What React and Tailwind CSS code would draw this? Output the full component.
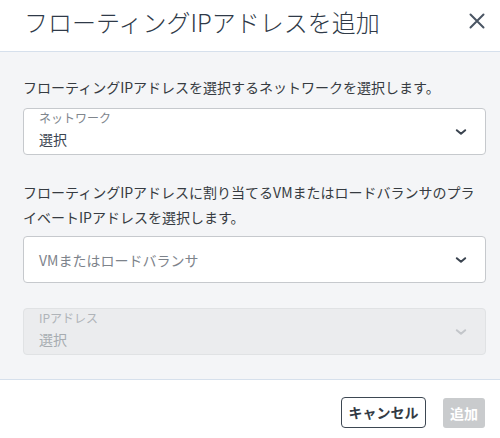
import React from "react";

function Chevron({ color = "#3b4450" }) {
  return (
    <svg width="12" height="8" viewBox="0 0 12 8" fill="none">
      <path d="M1.8 2.2 L6 5.8 L10.2 2.2" stroke={color} strokeWidth="2" strokeLinecap="round" strokeLinejoin="round" />
    </svg>
  );
}

export default function App() {
  return (
    <div
      className="w-[500px] h-[438px] bg-white overflow-hidden flex flex-col"
      style={{ fontFamily: '"Noto Sans CJK JP", "Noto Sans", sans-serif' }}
    >
      <div className="h-[52px] shrink-0 flex items-start justify-between pl-[24px] pr-[14px] pt-[8px] border-b border-[#d6e0ec]">
        <div className="text-[24px] leading-[28px] font-light text-[#2f3a48]">フローティングIPアドレスを追加</div>
        <button className="mt-[4px] w-[18px] h-[18px] flex items-center justify-center">
          <svg width="16" height="16" viewBox="0 0 16 16" fill="none">
            <path d="M1.5 1.5 L14.5 14.5 M14.5 1.5 L1.5 14.5" stroke="#4a5563" strokeWidth="2" strokeLinecap="round" />
          </svg>
        </button>
      </div>
      <div className="bg-[#f4f5f7] pl-[23px] pr-[14px] pt-[23px] pb-[24px] border-b border-[#d6e0ec] shrink-0">
        <p className="text-[14px] leading-[25px] text-[#363b41]">
          フローティングIPアドレスを選択するネットワークを選択します。
        </p>
        <div className="mt-[8px] h-[47px] bg-white border border-[#c6c9cd] rounded-[4px] flex items-center justify-between pl-[15px] pr-[18px]">
          <div className="flex flex-col -mt-[4px]">
            <span className="text-[12px] leading-[14px] text-[#80868d]">ネットワーク</span>
            <span className="text-[14px] leading-[20px] mt-[4px] text-[#3b4450]">選択</span>
          </div>
          <Chevron />
        </div>
        <p className="mt-[25px] text-[14px] leading-[25px] text-[#363b41]">
          フローティングIPアドレスに割り当てるVMまたはロードバランサのプライベートIPアドレスを選択します。
        </p>
        <div className="mt-[6px] h-[47px] bg-white border border-[#c6c9cd] rounded-[4px] flex items-center justify-between pl-[15px] pr-[18px]">
          <span className="text-[14px] leading-[20px] text-[#7d838b]">VMまたはロードバランサ</span>
          <Chevron />
        </div>
        <div className="mt-[25px] h-[47px] bg-[#ebecee] border border-[#e0e2e4] rounded-[4px] flex items-center justify-between pl-[15px] pr-[18px]">
          <div className="flex flex-col -mt-[4px]">
            <span className="text-[12px] leading-[14px] text-[#b0b4b9]">IPアドレス</span>
            <span className="text-[14px] leading-[20px] mt-[4px] text-[#a7acb1]">選択</span>
          </div>
          <Chevron color="#c3c6ca" />
        </div>
      </div>
      <div className="flex justify-end items-start gap-[17px] pt-[17px] pr-[15px]">
        <button className="h-[31px] w-[85px] border border-[#3d4752] rounded-[4px] text-[14px] font-bold text-[#333b45] flex items-center justify-center">
          キャンセル
        </button>
        <button className="h-[30px] w-[42px] mt-[1px] bg-[#c9cbcd] rounded-[3px] text-[14px] font-bold text-white flex items-center justify-center">
          追加
        </button>
      </div>
    </div>
  );
}
